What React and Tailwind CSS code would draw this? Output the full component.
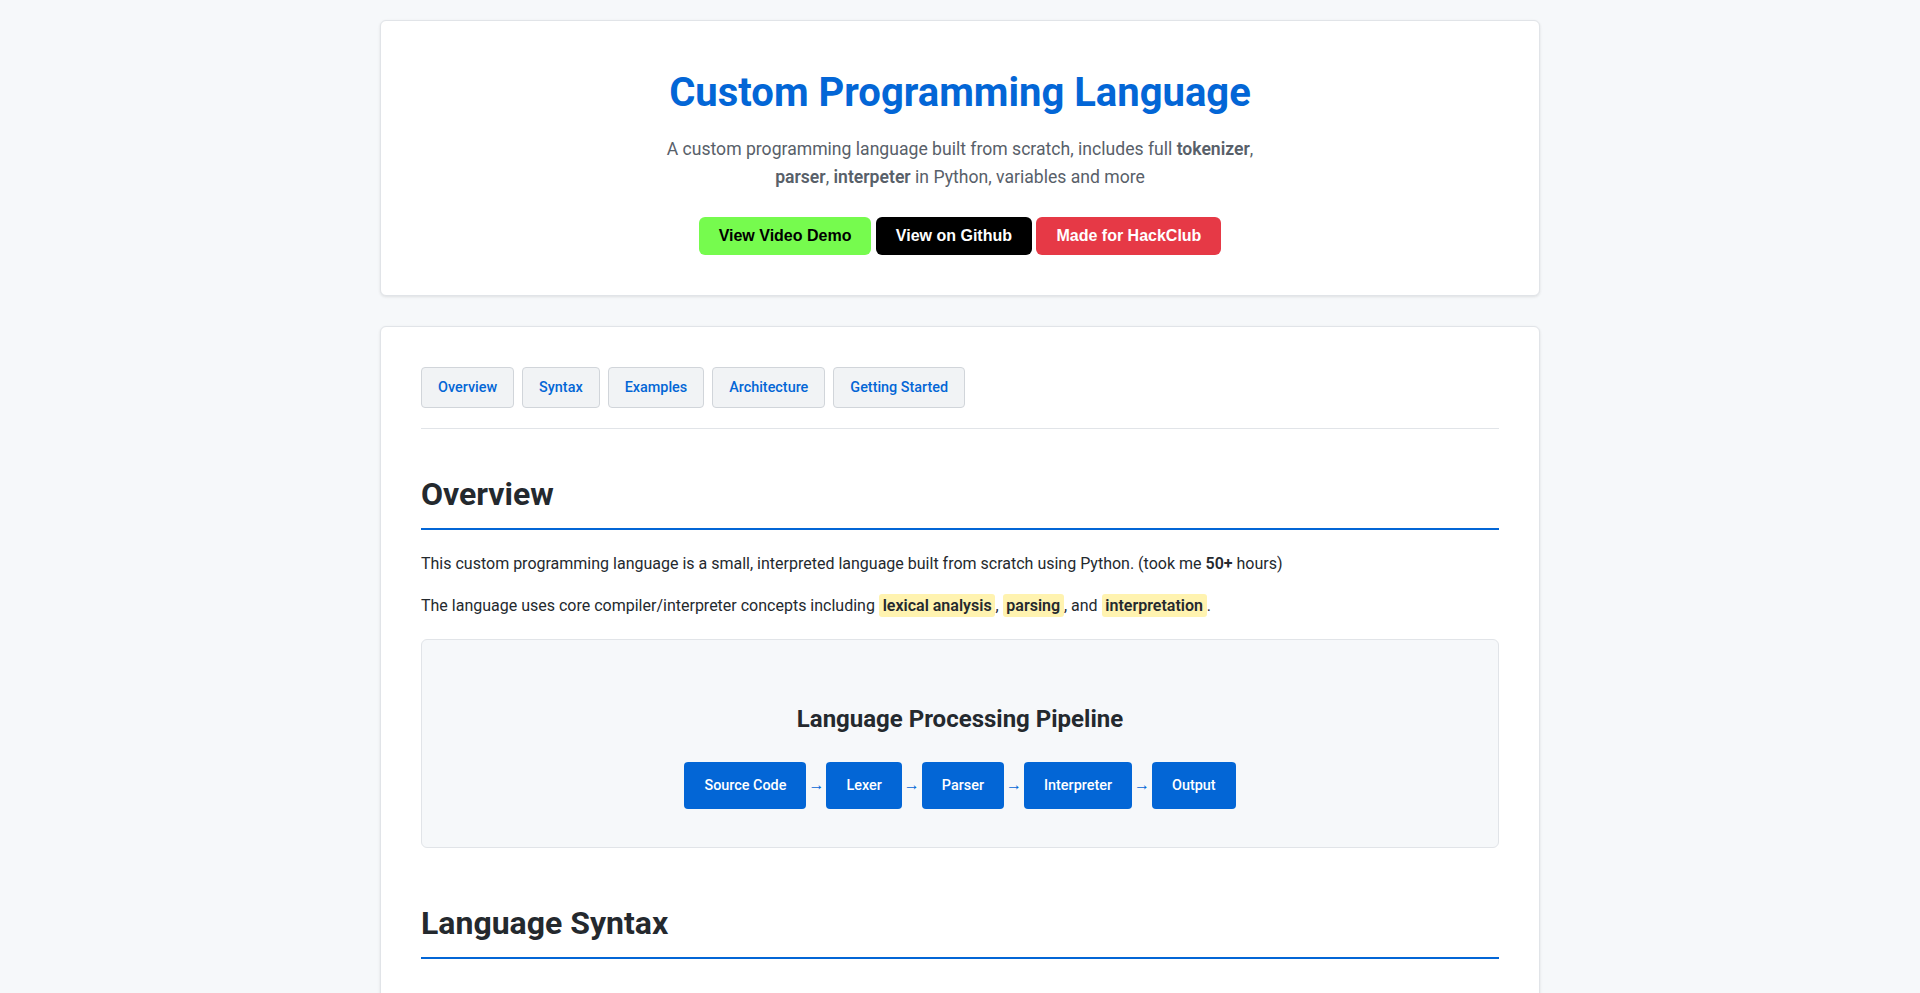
const tabs = ["Overview", "Syntax", "Examples", "Architecture", "Getting Started"];
const steps = ["Source Code", "Lexer", "Parser", "Interpreter", "Output"];

function Mark({ children }) {
  return <strong className="bg-[#fff3b0] px-[3.8px] py-0.5 rounded-[3px] font-semibold">{children}</strong>;
}

export default function App() {
  return (
    <div className="h-[993px] overflow-hidden bg-[#f6f8fa] text-[#24292e] font-['Roboto',sans-serif] text-base leading-[1.6]">
      <div className="max-w-[1200px] mx-auto p-5">
        <header className="bg-white border border-[#e1e4e8] rounded-md shadow-[0_1px_3px_rgba(0,0,0,0.1)] p-10 mb-[30px] text-center">
          <h1 className="text-[40px] leading-[1.6] font-bold text-[#0366d6] mb-2.5">Custom Programming Language</h1>
          <p className="text-[17.6px] leading-[1.6] text-[#586069] max-w-[600px] mx-auto mb-[25.6px]">
            A custom programming language built from scratch, includes full <strong className="font-semibold">tokenizer</strong>, <strong className="font-semibold">parser</strong>, <strong className="font-semibold">interpeter</strong> in Python, variables and more
          </p>
          <div className="flex justify-center gap-[4.45px] font-['Liberation_Sans',sans-serif] font-bold text-base leading-[18px]">
            <a className="px-5 py-2.5 rounded-md bg-[#76fb4e] text-black">View Video Demo</a>
            <a className="px-5 py-2.5 rounded-md bg-black text-white">View on Github</a>
            <a className="px-5 py-2.5 rounded-md bg-[#e63946] text-white">Made for HackClub</a>
          </div>
        </header>
        <main className="bg-white border border-[#e1e4e8] rounded-md shadow-[0_1px_3px_rgba(0,0,0,0.1)] p-10">
          <nav className="flex gap-2 pb-5 mb-10 border-b border-[#e1e4e8]">
            {tabs.map((t) => (
              <a key={t} className="px-4 py-2 bg-[#f1f3f5] border border-[#d1d5da] rounded text-[14.4px] font-medium leading-[1.6] text-[#0366d6]">{t}</a>
            ))}
          </nav>
          <h2 className="text-[32px] leading-[1.6] font-bold pb-2 mb-[21px] border-b-2 border-[#0366d6]">Overview</h2>
          <p className="mb-4">This custom programming language is a small, interpreted language built from scratch using Python. (took me <strong className="font-semibold">50+</strong> hours)</p>
          <p className="mb-[21px]">The language uses core compiler/interpreter concepts including <Mark>lexical analysis</Mark>, <Mark>parsing</Mark>, and <Mark>interpretation</Mark>.</p>
          <div className="bg-[#f6f8fa] border border-[#e1e4e8] rounded-md pt-[60px] pb-[38px] px-10 mb-[50px] text-center">
            <h3 className="text-2xl leading-[1.6] font-bold mb-[23px]">Language Processing Pipeline</h3>
            <div className="flex justify-center items-center gap-[2px]">
              {steps.map((s, i) => (
                <div key={s} className="flex items-center gap-[2px]">
                  {i > 0 && <span className="text-[#0366d6] text-base">→</span>}
                  <div className="bg-[#0366d6] text-white px-5 py-3 rounded text-[14.4px] leading-[1.6] font-medium">{s}</div>
                </div>
              ))}
            </div>
          </div>
          <h2 className="text-[32px] leading-[1.6] font-bold pb-2 mb-5 border-b-2 border-[#0366d6]">Language Syntax</h2>
        </main>
      </div>
    </div>
  );
}
